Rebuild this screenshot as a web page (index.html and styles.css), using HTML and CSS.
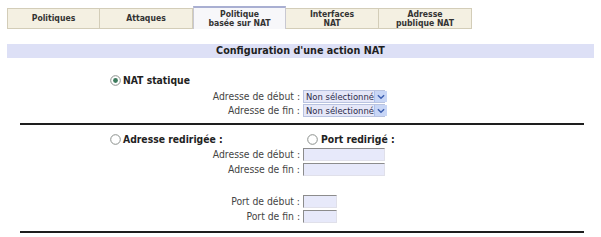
FILE: index.html
```html
<!DOCTYPE html>
<html lang="fr">
<head>
<meta charset="utf-8">
<title>Configuration d'une action NAT</title>
<link rel="stylesheet" href="styles.css">
</head>
<body>
<div class="page">
  <div class="tabs">
    <div class="tab"><span>Politiques</span></div>
    <div class="tab"><span>Attaques</span></div>
    <div class="tab active"><span>Politique<br>basée sur NAT</span></div>
    <div class="tab"><span>Interfaces<br>NAT</span></div>
    <div class="tab"><span>Adresse<br>publique NAT</span></div>
  </div>

  <div class="title-bar">Configuration d'une action NAT</div>

  <div class="section static">
    <div class="radio-row">
      <div class="radio-item">
        <svg class="radio" viewBox="0 0 11 11"><circle cx="5.5" cy="5.5" r="4.8" fill="#fff" stroke="#8a8f8c" stroke-width="1"/><circle cx="5.5" cy="5.5" r="2.4" fill="#3c7a5c"/></svg>
        <span class="bold">NAT statique</span>
      </div>
    </div>
    <div class="field-row first">
      <span class="label">Adresse de début :</span>
      <div class="select"><span class="sel-text">Non sélectionné</span><span class="sel-btn"><svg viewBox="0 0 9 6"><path d="M1 1 L4.5 4.5 L8 1" fill="none" stroke="#3d5fb0" stroke-width="1.6"/></svg></span></div>
    </div>
    <div class="field-row">
      <span class="label">Adresse de fin :</span>
      <div class="select"><span class="sel-text">Non sélectionné</span><span class="sel-btn"><svg viewBox="0 0 9 6"><path d="M1 1 L4.5 4.5 L8 1" fill="none" stroke="#3d5fb0" stroke-width="1.6"/></svg></span></div>
    </div>
  </div>

  <div class="section redirect">
    <div class="radio-row">
      <div class="radio-item wide">
        <svg class="radio" viewBox="0 0 11 11"><circle cx="5.5" cy="5.5" r="4.8" fill="#fff" stroke="#8a8f8c" stroke-width="1"/></svg>
        <span class="bold">Adresse redirigée :</span>
      </div>
      <div class="radio-item">
        <svg class="radio" viewBox="0 0 11 11"><circle cx="5.5" cy="5.5" r="4.8" fill="#fff" stroke="#8a8f8c" stroke-width="1"/></svg>
        <span class="bold port">Port redirigé :</span>
      </div>
    </div>
    <div class="field-row first">
      <span class="label">Adresse de début :</span>
      <div class="input"></div>
    </div>
    <div class="field-row">
      <span class="label">Adresse de fin :</span>
      <div class="input"></div>
    </div>
    <div class="field-row ports">
      <span class="label">Port de début :</span>
      <div class="input small"></div>
    </div>
    <div class="field-row">
      <span class="label">Port de fin :</span>
      <div class="input small"></div>
    </div>
  </div>
</div>
</body>
</html>
```

FILE: styles.css
```css
html, body {
  margin: 0;
  padding: 0;
  background: #ffffff;
}

body {
  font-family: "DejaVu Sans Condensed", "DejaVu Sans", sans-serif;
  font-stretch: condensed;
  color: #3a3a3a;
}

.page {
  width: 601px;
  height: 237px;
  overflow: hidden;
}

.tabs {
  display: flex;
  padding: 8px 0 0 7px;
  height: 21px;
  align-items: flex-end;
}

.tab {
  box-sizing: border-box;
  width: 93px;
  height: 21px;
  background: #f4f0e2;
  border: 1px solid #d3cdb8;
  border-left: none;
  display: flex;
  align-items: center;
  justify-content: center;
  text-align: center;
  font-weight: bold;
  font-size: 8.6px;
  line-height: 9px;
  color: #333;
}

.tab:first-child {
  border-left: 1px solid #d3cdb8;
}

.tab.active {
  height: 23px;
  background: #f7f7fa;
  border-top: 2px solid #a9afd2;
  border-left: 1px solid #c8c8d2;
  border-right: 1px solid #c8c8d2;
  border-bottom: none;
}

.title-bar {
  margin: 15px 0 0 7px;
  width: 587px;
  height: 14px;
  background: #dde0f6;
  font-weight: bold;
  font-size: 10.7px;
  line-height: 14px;
  text-align: center;
  color: #1f1f1f;
}

.section {
  margin-left: 20px;
  width: 564px;
  border-bottom: 2px solid #1e1e1e;
}

.section.static {
  margin-top: 16px;
  padding-bottom: 6px;
}

.section.redirect {
  padding-top: 8px;
  padding-bottom: 8px;
}

.radio-row {
  display: flex;
  align-items: center;
  padding-left: 90px;
  height: 12px;
  line-height: 12px;
}

.radio-item {
  display: flex;
  align-items: center;
  gap: 2px;
  height: 12px;
}

.radio-item.wide {
  width: 197px;
}

.radio {
  width: 11px;
  height: 11px;
  flex: none;
}

.bold {
  font-weight: bold;
  font-size: 10.3px;
  line-height: 12px;
  color: #222;
}

.bold.port {
  margin-left: 1px;
}

.field-row {
  display: flex;
  align-items: center;
  height: 13px;
  margin-top: 1px;
}

.field-row.first {
  margin-top: 4px;
}

.redirect .field-row {
  margin-top: 2px;
}

.redirect .field-row.first {
  margin-top: 3px;
}

.redirect .field-row.ports {
  margin-top: 19px;
}

.label {
  box-sizing: border-box;
  width: 283px;
  padding-right: 3px;
  text-align: right;
  font-size: 10.3px;
  line-height: 13px;
  color: #444;
}

.select {
  box-sizing: border-box;
  width: 82px;
  height: 13px;
  display: flex;
  background: #e5e7f8;
  border: 1px solid #b9c3e0;
}

.sel-text {
  flex: 1;
  font-size: 9.4px;
  line-height: 11px;
  padding-left: 2px;
  color: #2c2c4a;
  white-space: nowrap;
}

.sel-btn {
  flex: none;
  width: 12px;
  background: #c8d6f6;
  border-left: 1px solid #b0c0ea;
  display: flex;
  align-items: center;
  justify-content: center;
}

.sel-btn svg {
  width: 8px;
  height: 6px;
}

.input {
  box-sizing: border-box;
  width: 82px;
  height: 13px;
  background: #e7e9fa;
  border-top: 1px solid #8c8c8c;
  border-left: 1px solid #8c8c8c;
  border-right: 1px solid #e0e0ea;
  border-bottom: 1px solid #e0e0ea;
}

.input.small {
  width: 34px;
}
```
